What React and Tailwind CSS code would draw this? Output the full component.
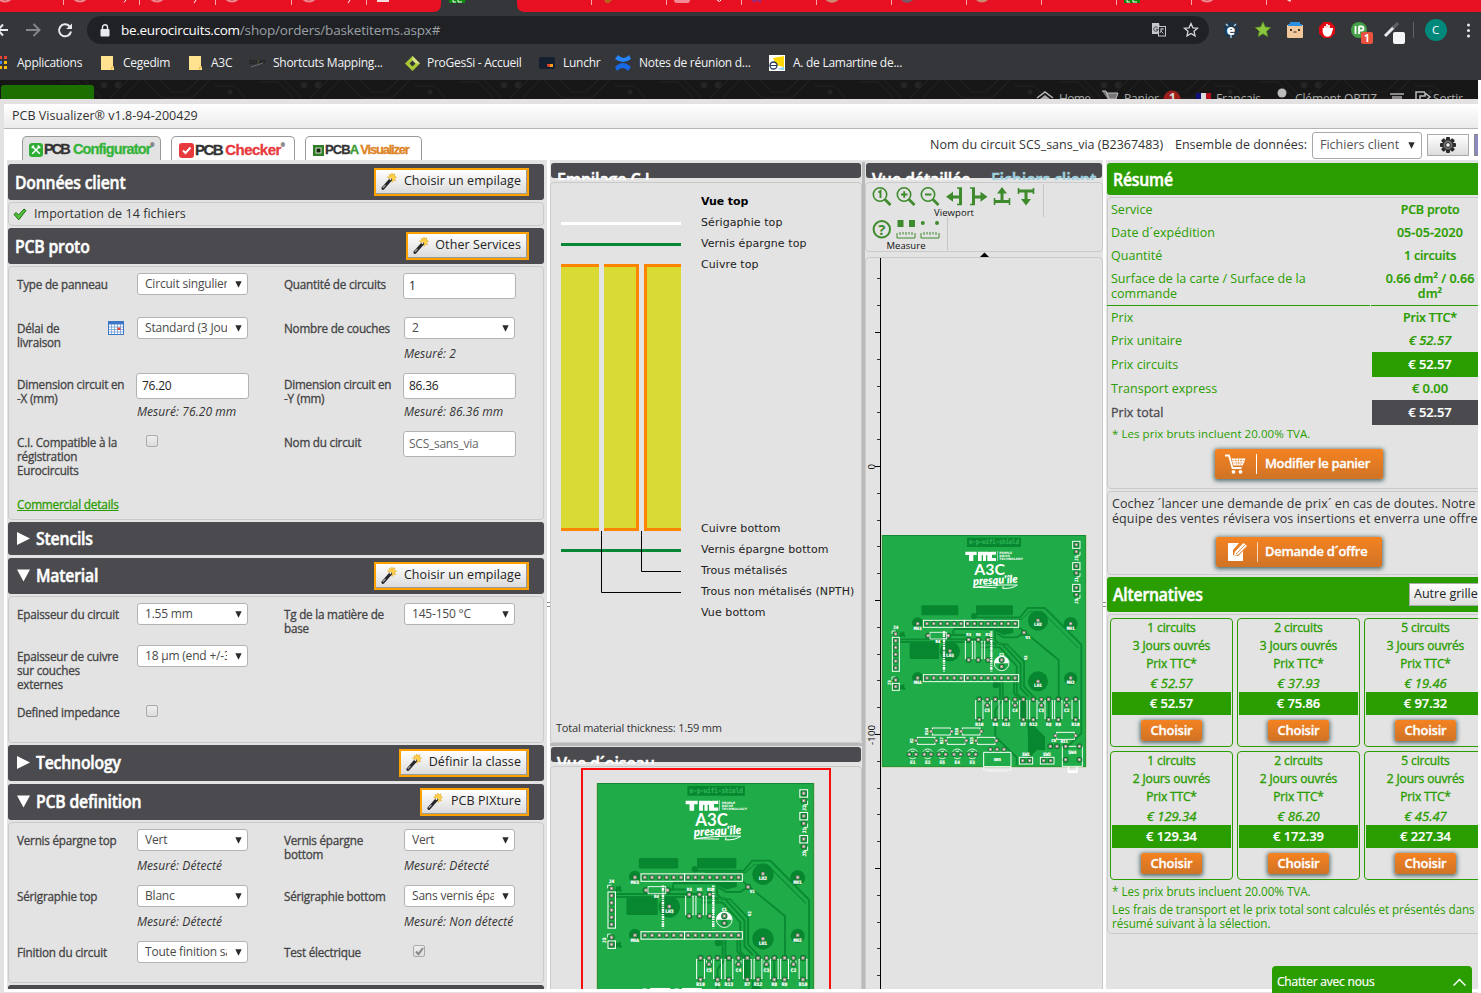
import React from "react";

const OS = "font-['Open_Sans','Noto_Sans',sans-serif]";

/* ---------- icons ---------- */
const Wand = () => (
  <svg width="16" height="17" viewBox="0 0 16 17">
    <path d="M11 0l.8 2.300L14 .8l-.8 2.500 2.300.9-2 1.300 1 2.300-2.400-.8-.8 2.400-1.400-2.200-2.300.6.9-2.300L6.500 4.200l2.500-.6L8.200 1.200l2 1.200z" fill="#ffd24a" stroke="#e8a818" strokeWidth=".6" />
    <path d="M2 15.200L9.500 6.800" stroke="#26262c" strokeWidth="3.200" strokeLinecap="round" />
    <path d="M1.800 14.800L4.500 11.800" stroke="#a5a5ad" strokeWidth="1.200" />
    <path d="M8.800 6.600l1.200-1.300" stroke="#f4f4f4" strokeWidth="1.800" />
  </svg>
);
const Check = () => (
  <svg width="14" height="13" viewBox="0 0 14 13">
    <path d="M1 6.500L3.200 4.500 5.500 7 11 1l2 1.500L5.800 11.800z" fill="#52c03a" stroke="#1d6f12" strokeWidth="1" />
  </svg>
);
const Calendar = () => (
  <svg width="16" height="14" viewBox="0 0 16 14">
    <rect x=".5" y=".5" width="15" height="13" fill="#fff" stroke="#3d76c4" />
    <rect x="0" y="0" width="16" height="3.500" fill="#3d76c4" />
    <path d="M3.500 3v10M6.500 3v10M9.500 3v10M12.500 3v10M1 6h14M1 8.500h14M1 11h14" stroke="#6f9ddb" strokeWidth=".8" />
    <rect x="9.500" y="6.500" width="3" height="2.500" fill="#e0492c" />
  </svg>
);
const Cart = () => (
  <svg width="21" height="20" viewBox="0 0 21 20">
    <path d="M0 1.500h4l3.500 12.500h9" fill="none" stroke="#fff" strokeWidth="1.800" />
    <path d="M6.500 4.500H20.500l-2.700 7H8.500z" fill="#fff" />
    <path d="M7.500 6.500h12M8.500 9h10" stroke="#e3791d" strokeWidth=".7" strokeDasharray="1.500 1" />
    <path d="M10.500 4.500l1 7M13.500 4.500v7M16.500 4.500l-1 7" stroke="#e3791d" strokeWidth=".4" />
    <circle cx="8.500" cy="17.800" r="1.900" fill="#fff" />
    <circle cx="15.500" cy="17.800" r="1.900" fill="#fff" />
  </svg>
);
const Edit = () => (
  <svg width="20" height="20" viewBox="0 0 20 20">
    <path d="M0 1h11L5 8v5l5 1 5-5v10H0z" fill="#fff" />
    <path d="M6 13.500l.8-3.800L15.500 1l3.500 3-9 8.800z" fill="#fff" />
    <path d="M8 12l9-9" stroke="#e3791d" strokeWidth=".8" />
  </svg>
);
const Gear = () => (
  <svg width="18" height="18" viewBox="-9 -9 18 18">
    {[0, 45, 90, 135].map((a) => (
      <rect key={a} x="-2" y="-8" width="4" height="16" rx="1" fill="#2b2b2b" transform={`rotate(${a})`} />
    ))}
    <circle r="5.800" fill="#333" />
    <circle r="4.400" fill="#777" />
    <circle r="2.400" fill="#eee" stroke="#222" />
  </svg>
);

/* ---------- browser chrome ---------- */
const seps = [63, 139, 215, 291, 366, 591, 666, 741, 816, 891, 966, 1041, 1116, 1191, 1266];
const tabDots = [5, 80, 157, 232, 309, 832, 1207];

function TabStrip() {
  return (
    <svg width="1481" height="12" className="block shrink-0">
      <rect width="1481" height="12" fill="#35363a" />
      <path d="M0 0H441V4Q441 12 433 12H0z" fill="#e81123" />
      <path d="M517 0H1481V12H525Q517 12 517 4z" fill="#e81123" />
      {seps.map((x) => (
        <rect key={x} x={x} width="1" height="5" fill="#f6a5ac" />
      ))}
      {tabDots.map((x) => (
        <path key={x} d={`M${x - 6} -1q6 5 12 0`} fill="none" stroke="#e98a90" strokeWidth="2" />
      ))}
      <path d="M126 0l-2 2.500M196 0l-2 3M350 0l-2 3M717 0q3 3 4 0" stroke="#fff" fill="none" />
      <rect x="377" y="0" width="12" height="2" fill="#f3d9d9" />
      <path d="M604 0h8l-3 3h-3z" fill="#b5651d" />
      <path d="M674 0h16q0 3-3 3h-10q-3 0-3-3z" fill="#f48a96" />
      <path d="M752 0h9l0 3-4-2-4 2z" fill="#9c2a7c" />
      <path d="M826 0q6 5 12 0zM976 0q6 5 12 0z" fill="#c98a70" />
      <path d="M901 0q6 6 12 0z" fill="#7a5a66" />
      <rect x="449" width="16" height="3" fill="#0a8a0a" />
      <path d="M453 0v2h3M458 0v2h4" stroke="#fff" fill="none" />
      <rect x="1124" width="16" height="3" fill="#0a8a0a" />
      <path d="M1127 0v2h3M1133 0v2h4" stroke="#fff" fill="none" />
      <path d="M1287 0h4v1.500h-2z" fill="#f6c8cc" />
    </svg>
  );
}

function Toolbar() {
  return (
    <div className="flex h-[36px] shrink-0 items-center text-white">
      <svg width="84" height="36" viewBox="0 0 84 36" fill="none">
        <path d="M-2 18H8M-2 18L3 12.500M-2 18L3 23.500" stroke="#e8eaed" strokeWidth="2" />
        <path d="M26 18H39M33.500 12L39.500 18L33.500 24" stroke="#85868a" strokeWidth="1.900" />
        <path d="M69.500 14.200A6 6 0 1 0 71 19.500" stroke="#e8eaed" strokeWidth="2" />
        <path d="M72 11.500V17H66.200z" fill="#e8eaed" />
      </svg>
      <div className="ml-[3px] flex h-7 w-[1122px] items-center rounded-full bg-[#202124]">
        <svg className="ml-[13px]" width="10" height="13" viewBox="0 0 10 13">
          <rect x=".5" y="5" width="9" height="7.500" rx="1" fill="#e8eaed" />
          <path d="M2.500 5.500V3.300a2.500 2.500 0 0 1 5 0V5.500" fill="none" stroke="#e8eaed" strokeWidth="1.400" />
        </svg>
        <div className={`ml-[11px] flex-1 text-[13.500px] leading-5 tracking-[-0.29px] text-white ${OS}`}>
          be.eurocircuits.com<span className="tracking-[-0.16px] text-[#9aa0a6]">/shop/orders/basketitems.aspx#</span>
        </div>
        <svg width="50" height="16" viewBox="0 0 50 16" className="mr-[8px]">
          <path d="M1 1h7l2 11H1z" fill="#c4c7cb" />
          <rect x="7.500" y="4.500" width="7" height="9.500" fill="#202124" stroke="#c4c7cb" />
          <path d="M9 7h4M11 6v1l-2 4M9.500 8.500l3 3" stroke="#c4c7cb" strokeWidth=".9" fill="none" />
          <path d="M6.500 5.500a2.200 2.200 0 1 0 .6 1.800H5" stroke="#35363a" fill="none" />
          <path d="M40 1.500l1.900 4.300 4.600.4-3.500 3.100 1 4.500-4-2.400-4 2.400 1-4.500L33.500 6.200l4.600-.4z" stroke="#d5d7da" strokeWidth="1.300" fill="none" />
        </svg>
      </div>
      <svg width="272" height="36" viewBox="1209 12 272 36">
        <circle cx="1231" cy="30" r="7.500" fill="#1d3a52" />
        <text x="1226.500" y="35" fontSize="14" fontWeight="800" fill="#fff" fontFamily="Open Sans">e</text>
        <path d="M1226 24l2 2M1236 24l-2 2M1231 35v3" stroke="#a9cde0" strokeWidth="1.500" />
        <path d="M1263 22l2.200 5 5.300.6-4 3.600 1.100 5.200-4.700-2.700-4.600 2.700 1.100-5.200-4-3.600 5.400-.6z" fill="#8cc63f" stroke="#5e9a24" strokeWidth=".8" />
        <rect x="1287" y="23" width="16" height="15" rx="1" fill="#f2c79b" />
        <rect x="1287" y="23" width="16" height="2" fill="#35363a" />
        <rect x="1290" y="22" width="10" height="3" fill="#2d8fe0" />
        <rect x="1288" y="24" width="14" height="2" fill="#2d8fe0" />
        <circle cx="1291" cy="30" r="1" /><circle cx="1299" cy="30" r="1" /><path d="M1293.500 32h3" stroke="#222" />
        <path d="M1323.700 22h6.600l4.700 4.700v6.600l-4.700 4.700h-6.600l-4.700-4.700v-6.600z" fill="#e30613" />
        <path d="M1323.500 28v4q1 4 4 4t4-5l1-3M1325 32v-6M1327 31v-7M1329 31v-6" stroke="#fff" strokeWidth="1.700" fill="#fff" />
        <circle cx="1359" cy="30" r="8" fill="#43a047" />
        <path d="M1355.500 26v8M1359 26v8M1359 26.500h2.500q2 0 2 2t-2 2h-2" stroke="#fff" strokeWidth="1.800" fill="none" />
        <rect x="1361" y="32" width="12" height="12" rx="2" fill="#e8523f" />
        <text x="1364" y="42" fontSize="10" fontWeight="700" fill="#fff" fontFamily="Open Sans">1</text>
        <path d="M1385 36l9-9" stroke="#e8eaed" strokeWidth="3" /><path d="M1393 28l5-5" stroke="#5f6368" strokeWidth="3" />
        <rect x="1393" y="32" width="12" height="12" rx="2" fill="#f4f5f6" />
        <rect x="1413" y="22" width="1" height="16" fill="#606266" />
        <circle cx="1436" cy="30" r="11" fill="#00897b" />
        <text x="1432" y="34" fontSize="11.500" fill="#fff" fontFamily="Open Sans">C</text>
        <circle cx="1468.500" cy="25" r="1.500" fill="#e8eaed" /><circle cx="1468.500" cy="30.500" r="1.500" fill="#e8eaed" /><circle cx="1468.500" cy="36" r="1.500" fill="#e8eaed" />
      </svg>
    </div>
  );
}

const Folder = () => (
  <svg width="14" height="14" viewBox="0 0 14 14"><path d="M0 0h12v10l1 1v3H0z" fill="#ffe38f" /><path d="M10 14v-3h3" fill="#e8b84a" /></svg>
);

const bookmarks = [
  { w: "w-[17px]", text: "Applications", next: "w-[84px]", icon: (
    <svg width="8" height="14" viewBox="0 0 8 14">
      <path d="M0 0h2v3H0zM4 0h3v3H4z" fill="#ea4335" /><path d="M0 5h2v3H0z" fill="#4285f4" /><path d="M4 5h3v3H4zM0 10h2v3H0zM4 10h3v3H4z" fill="#fbbc04" />
    </svg>) },
  { w: "w-[22px]", text: "Cegedim", next: "w-[66px]", icon: <Folder /> },
  { w: "w-[22px]", text: "A3C", next: "w-[38px]", icon: <Folder /> },
  { w: "w-[24px]", text: "Shortcuts Mapping...", next: "w-[131px]", icon: (
    <svg width="17" height="12" viewBox="0 0 17 12"><text x="0" y="7" fontSize="6" fontWeight="700" fill="#1d1e20" fontFamily="Liberation Sans">SO<tspan fill="#55592b">/</tspan>AT</text><path d="M2 10l12-4" stroke="#6a6b6f" /></svg>) },
  { w: "w-[23px]", text: "ProGesSi - Accueil", next: "w-[112px]", icon: (
    <svg width="17" height="17" viewBox="0 0 17 17"><path d="M8.500 1l7.500 7.500-7.500 7.500L1 8.500z" fill="#a9c934" /><path d="M8.500 1l7.500 7.500-7.500 0z" fill="#dbe08a" /><path d="M8.500 5.500l3 3-3 3-3-3z" fill="#35363a" /></svg>) },
  { w: "w-[24px]", text: "Lunchr", next: "w-[52px]", icon: (
    <svg width="17" height="13" viewBox="0 0 17 13"><rect width="16" height="12" rx="2" fill="#14202f" /><path d="M8 7h6v3h-5z" fill="#ff9b1a" /><path d="M8 7h3v3H9z" fill="#e5402c" /></svg>) },
  { w: "w-[24px]", text: "Notes de réunion d...", next: "w-[130px]", icon: (
    <svg width="16" height="16" viewBox="0 0 16 16"><path d="M0 4l3-4q6 6 11 0l2 4Q8 10 0 4z" fill="#2684ff" /><path d="M0 12Q8 4 16 12l-3 4q-5-6-11 0z" fill="#1668e3" /></svg>) },
  { w: "w-[24px]", text: "A. de Lamartine de...", next: "w-[130px]", icon: (
    <svg width="16" height="16" viewBox="0 0 16 16"><rect width="16" height="16" fill="#fff" /><path d="M4 3l11-2v11l-8-2z" fill="#ffd800" /><path d="M8 14l7-2v3z" fill="#7fd3e8" /><circle cx="4.500" cy="10.500" r="3.500" fill="#fff" stroke="#233a5c" strokeWidth="1.300" /><path d="M1 10.500h7" stroke="#233a5c" /></svg>) },
];

function Bookmarks() {
  return (
    <div className={`flex h-8 shrink-0 items-center pb-[2px] text-[12px] tracking-[-0.27px] whitespace-nowrap text-[#f1f3f4] ${OS}`}>
      {bookmarks.map((b) => (
        <div key={b.text} className="flex shrink-0 items-center">
          <span className={`${b.w} shrink-0`}>{b.icon}</span>
          <span className={`${b.next} shrink-0`}>{b.text}</span>
        </div>
      ))}
    </div>
  );
}

function SiteHeader() {
  return (
    <div className="flex h-[19px] w-[1478px] shrink-0 overflow-hidden bg-[#171717]">
      <svg width="1478" height="19">
        {[60, 260, 460, 660, 860, 1060, 1260].map((x) => (
          <g key={x} stroke="#242424" fill="none">
            <path d={`M${x} 2h18l16 16M${x + 6} -2h16l20 20M${x + 50} 18l18-18M${x + 62} 18l18-18M${x + 84} 0l18 18h30l18-18`} />
            <path d={`M${x + 100} 0l12 12h14l12-12M${x + 155} 6h20l10 12`} />
            <g fill="#242424"><circle cx={x + 44} cy="5" r="3" /><circle cx={x + 58} cy="5" r="3" /><circle cx={x + 170} cy="12" r="2" /></g>
          </g>
        ))}
        <path d="M1 19V8q0-3 3-3H91q3 0 3 3V19z" fill="#1c7000" />
        <g fill="#aaa" fontFamily="Open Sans" fontSize="12">
          <path d="M1037 18l8-6 8 6" fill="none" stroke="#bbb" strokeWidth="1.500" /><path d="M1040 19l5-4 5 4z" />
          <text x="1059" y="23" textLength="32">Home</text>
          <path d="M1102 11h4l3 10M1107 13h11l-2 6h-7z" stroke="#bbb" fill="#777" />
          <text x="1124" y="23" textLength="35">Panier</text>
          <circle cx="1172" cy="19" r="8.500" fill="#9c1f1c" />
          <text x="1169" y="22" fontWeight="700" fill="#ddd">1</text>
          <path d="M1196 13h5v7h-5z" fill="#10107c" /><path d="M1201 13h5v7h-5z" fill="#ddd" /><path d="M1206 13h5v7h-5z" fill="#b3131f" />
          <text x="1216" y="23" textLength="45">Français</text>
          <circle cx="1282" cy="13" r="4.500" fill="#bbb" />
          <text x="1295" y="23" textLength="82">Clément ORTIZ</text>
          <path d="M1390 13h14v2h-14zM1392 16h10v3h-10z" fill="#888" />
          <path d="M1425 12h-9v7M1420 19v-3h5v-3l5 4-3 2" stroke="#bbb" strokeWidth="1.500" fill="none" />
          <text x="1433" y="23" textLength="30">Sortir</text>
        </g>
      </svg>
    </div>
  );
}

/* ---------- modal chrome ---------- */
const Btn = ({ children, className = "" }) => (
  <span className={`border border-[#aaa] bg-gradient-to-b from-white to-[#ddd] ${className}`}>{children}</span>
);

function LogoTabs() {
  const tab = "flex h-[24px] items-center rounded-t-[5px] border border-b-0 border-[#999] pt-[3px] font-['Liberation_Sans',sans-serif] font-bold whitespace-nowrap [-webkit-text-stroke:0.3px]";
  return (
    <div className="flex items-end gap-[10px] pl-[18px]">
      <div className={`${tab} w-[139px] bg-[#e3e3e3] pl-[6px] text-[14.500px]`}>
        <svg width="14" height="14" viewBox="0 0 13 13"><rect width="13" height="13" rx="3" fill="#2eae34" /><path d="M3 3l7 7M10 3l-7 7M2.500 4.500l2-2M8 2.500l2.500 2" stroke="#fff" strokeWidth="1.500" /></svg>
        <span className="ml-[1px] tracking-[-1.9px] text-[#333]">PCB</span>
        <span className="ml-[4px] tracking-[-0.85px] text-[#35b43a]">Configurator</span>
        <span className="mb-[9px] text-[5px] text-[#777]">®</span>
      </div>
      <div className={`${tab} w-[124px] bg-white pl-[7px] text-[15px]`}>
        <svg width="15" height="15" viewBox="0 0 15 15"><rect width="15" height="15" rx="3" fill="#e8393d" /><path d="M4 7.500l2.500 2.500L11.500 4.500" stroke="#fff" strokeWidth="1.900" fill="none" /></svg>
        <span className="ml-[1px] tracking-[-1.500px] text-[#333]">PCB</span>
        <span className="ml-[3px] tracking-[-0.500px] text-[#e8393d]">Checker</span>
        <span className="mb-[9px] text-[5px] text-[#777]">®</span>
      </div>
      <div className={`${tab} w-[117px] bg-white pl-[7px] text-[13px]`}>
        <svg width="11" height="11" viewBox="0 0 11 11"><rect width="11" height="11" fill="#2f7d28" /><rect x="3" y="3" width="5" height="5" fill="#14260f" stroke="#cde3c8" /></svg>
        <span className="ml-[1px] tracking-[-0.9px] text-[#333]">PCB<span className="text-[#3f9a35]">A</span></span>
        <span className="ml-[2px] tracking-[-1.200px] text-[#de8426]">Visualizer</span>
      </div>
    </div>
  );
}

/* ---------- left column ---------- */
const HeadText = ({ children, className = "origin-left scale-x-[0.9] text-white" }) => (
  <span className={`inline-block text-[17.500px] leading-[22px] font-semibold tracking-[-0.2px] whitespace-nowrap [-webkit-text-stroke:0.5px] ${className}`}>{children}</span>
);

const WandBtn = ({ label, w }) => (
  <span className={`mr-[15px] flex h-[28px] ${w} shrink-0 border-2 border-[#ffa200] bg-white`}>
    <span className="flex flex-1 items-center justify-between border-r border-b border-[#999] bg-gradient-to-b from-white to-[#dcdcdc] pr-[5px] pl-[5px] text-[12.500px] tracking-[0.08px] whitespace-nowrap text-[#222]">
      <Wand />
      <span>{label}</span>
    </span>
  </span>
);

function Section({ title, arrow, btn, w, h = "h-[36px]" }) {
  return (
    <div className={`flex ${h} shrink-0 items-center justify-between overflow-hidden rounded-[3px] bg-[#4b4b4f] pl-[7px]`}>
      <span className={arrow ? "-mt-[2px] flex items-center" : "flex items-center"}>
        {arrow && (
          <svg width="13" height="13" viewBox="0 0 13 13" className="mt-px mr-[6px] ml-[2px]">
            <path d={arrow === "right" ? "M0 0L13 6.500 0 13z" : "M0 .5h13L6.500 12.500z"} fill="#fff" />
          </svg>
        )}
        <HeadText>{title}</HeadText>
      </span>
      {btn && <WandBtn label={btn} w={w} />}
    </div>
  );
}

const Arrow = () => (
  <svg width="7" height="7" viewBox="0 0 7 7" className="shrink-0"><path d="M.3 .3h6.400L3.500 6.800z" fill="#2b2b2b" /></svg>
);

function Field({ f }) {
  if (!f) return <div className="w-[120px]" />;
  return (
    <div className="flex w-[120px] shrink-0 flex-col">
      {f.select && (
        <div className="flex h-[22px] w-[111px] items-center justify-between rounded-[3px] border border-[#b3b3b3] bg-white pr-[5px] pl-[7px] text-[12px] text-[#4a4a4a]">
          <span className="w-[82px] overflow-hidden tracking-[-0.2px] whitespace-nowrap">{f.select}</span>
          <Arrow />
        </div>
      )}
      {f.input && (
        <div className={`-ml-px flex h-[26px] w-[113px] items-center rounded-[3px] border border-[#b3b3b3] bg-white pl-[5px] text-[12px] tracking-[-0.25px] ${f.dim ? "text-[#666]" : "text-[#222]"}`}>{f.input}</div>
      )}
      {f.box && (
        <div className="mt-[4px] ml-[9px] flex size-3 items-center justify-center rounded-[2px] border border-[#aaa] bg-gradient-to-b from-[#eee] to-[#ddd]">
          {f.box === "on" && <svg width="9" height="9" viewBox="0 0 9 9"><path d="M1 4.500l2.500 2.700L8 1" fill="none" stroke="#888" strokeWidth="2" /></svg>}
        </div>
      )}
      {f.note && <div className={`${f.input ? "mt-[5px]" : "mt-[7px]"} text-[12px] leading-4 tracking-[0.05px] whitespace-nowrap text-[#333] italic`}>{f.note}</div>}
    </div>
  );
}

const label = "text-[11.700px] leading-[14px] tracking-[-0.22px] whitespace-pre [-webkit-text-stroke:0.3px]";

function Row({ r }) {
  return (
    <div className={`flex ${r.h} pl-[8px] text-[#444]`}>
      <div className="flex w-[120px] shrink-0 justify-between pt-[4px] pr-[13px]">
        <span className={label}>{r.a}</span>
        {r.cal && <Calendar />}
      </div>
      <Field f={r.fa} />
      <div className={`ml-[27px] w-[120px] shrink-0 pt-[4px] ${label}`}>{r.b}</div>
      <Field f={r.fb} />
    </div>
  );
}

const proto = [
  { h: "h-[44px]", a: "Type de panneau", fa: { select: "Circuit singulier" }, b: "Quantité de circuits", fb: { input: "1" } },
  { h: "h-[56px]", a: "Délai de\nlivraison", cal: true, fa: { select: "Standard (3 Jours)" }, b: "Nombre de couches", fb: { select: "2", note: "Mesuré: 2" } },
  { h: "h-[58px]", a: "Dimension circuit en\n-X (mm)", fa: { input: "76.20", note: "Mesuré: 76.20 mm" }, b: "Dimension circuit en\n-Y (mm)", fb: { input: "86.36", note: "Mesuré: 86.36 mm" } },
  { h: "h-[65px]", a: "C.I. Compatible à la\nrégistration\nEurocircuits", fa: { box: "off" }, b: "Nom du circuit", fb: { input: "SCS_sans_via", dim: true } },
];
const material = [
  { h: "h-[42px]", a: "Epaisseur du circuit", fa: { select: "1.55 mm" }, b: "Tg de la matière de\nbase", fb: { select: "145-150 °C" } },
  { h: "h-[56px]", a: "Epaisseur de cuivre\nsur couches\nexternes", fa: { select: "18 µm (end +/-35)" } },
  { h: "h-[30px]", a: "Defined impedance", fa: { box: "off" } },
];
const definition = [
  { h: "h-[56px]", a: "Vernis épargne top", fa: { select: "Vert", note: "Mesuré: Détecté" }, b: "Vernis épargne\nbottom", fb: { select: "Vert", note: "Mesuré: Détecté" } },
  { h: "h-[56px]", a: "Sérigraphie top", fa: { select: "Blanc", note: "Mesuré: Détecté" }, b: "Sérigraphie bottom", fb: { select: "Sans vernis épargne", note: "Mesuré: Non détecté" } },
  { h: "h-[30px]", a: "Finition du circuit", fa: { select: "Toute finition sans" }, b: "Test électrique", fb: { box: "on" } },
];

const panel = "shrink-0 rounded-[4px] border border-[#cacaca]";

function LeftColumn() {
  return (
    <div className="flex w-[540px] shrink-0 flex-col overflow-hidden bg-[#e3e3e3] pt-1 pr-[3px] pl-px">
      <Section title="Données client" btn="Choisir un empilage" w="w-[155px]" />
      <div className={`${panel} mt-[2px] flex h-[24px] items-center gap-[7px] pl-[4px] text-[12.500px] tracking-[0.05px] text-[#333]`}>
        <Check />
        <span>Importation de 14 fichiers</span>
      </div>
      <div className="h-[2px] shrink-0" />
      <Section title="PCB proto" btn="Other Services" w="w-[123px]" />
      <div className={`${panel} mt-[2px] h-[254px] pt-[6px]`}>
        {proto.map((r) => <Row key={r.a} r={r} />)}
        <div className="pl-[8px] text-[11.800px] leading-4 tracking-[-0.2px] text-[#2a9d00] underline [-webkit-text-stroke:0.3px]">Commercial details</div>
      </div>
      <div className="h-[2px] shrink-0" />
      <Section title="Stencils" arrow="right" h="h-[33px]" />
      <div className="h-[3px] shrink-0" />
      <Section title="Material" arrow="down" btn="Choisir un empilage" w="w-[155px]" />
      <div className={`${panel} mt-[2px] h-[147px] pt-[6px]`}>{material.map((r) => <Row key={r.a} r={r} />)}</div>
      <div className="h-[2px] shrink-0" />
      <Section title="Technology" arrow="right" btn="Définir la classe" w="w-[130px]" />
      <div className="h-[3px] shrink-0" />
      <Section title="PCB definition" arrow="down" btn="PCB PIXture" w="w-[109px]" />
      <div className={`${panel} mt-[2px] h-[161px] pt-[6px]`}>{definition.map((r) => <Row key={r.a} r={r} />)}</div>
      <div className="mt-[2px] h-[8px] shrink-0 rounded-[3px] bg-[#4b4b4f]" />
    </div>
  );
}

/* ---------- circuit board drawing ---------- */
const T = ({ x, y, s = 13, children, r, fill = "#fff", w }) => (
  <text x={x} y={y} fontSize={s} fontWeight="700" fill={fill} stroke={fill} strokeWidth=".6" textAnchor="middle" textLength={w} lengthAdjust="spacingAndGlyphs" fontFamily="DejaVu Sans Mono, monospace" transform={r ? `rotate(${r} ${x} ${y})` : undefined}>{children}</text>
);
const Pad = ({ x, y, r = 9 }) => (
  <g>
    <circle cx={x} cy={y} r={r} fill="#087d2c" />
    <rect x={x - 5} y={y - 5} width="10" height="10" rx="2.500" fill="#9c8f86" />
    <rect x={x - 2} y={y - 2} width="4" height="4" fill="#f1eeeb" />
  </g>
);
const Box = ({ x, y, w, h }) => <rect x={x} y={y} width={w} height={h} fill="none" stroke="#fff" strokeWidth="2.800" />;
const range = (n, a, d) => Array.from({ length: n }, (_, i) => a + i * d);
const bottomR = [[328, "R10"], [376, "R6"], [408, "R13"], [460, "R7"], [490, "R12"], [536, "R8"], [565, "R9"], [617, "R10"]];
const bottomC = [[352, "C5"], [435, "C4"], [514, "C3"], [590, "C2"]];
const lowerR = [[183, 245, 634, "R14"], [273, 334, 634, "R16"], [138, 199, 662, "R2"], [228, 289, 662, "R17"], [318, 379, 662, "R15"], [556, 617, 647, "R11"]];

function Board({ width, height }) {
  const tr = "#0a8a33";
  return (
    <svg width={width} height={height} viewBox="36 45 612 696" preserveAspectRatio="none" overflow="visible" className="block">
      <rect x="36" y="45" width="612" height="696" fill="#1fab47" />
      <rect x="37.500" y="46.500" width="609" height="693" fill="none" stroke="#128a35" strokeWidth="3" />
      <path d="M36 45V741H648V45" fill="none" stroke="#7fae3c" strokeWidth="1.500" />
      <g fill="#078730">
        <rect x="291" y="53" width="162" height="28" />
        <rect x="154" y="256" width="111" height="30" rx="4" />
        <rect x="318" y="256" width="111" height="30" rx="4" />
        <rect x="119" y="369" width="88" height="48" rx="3" />
        <circle cx="504" cy="302" r="30" /><circle cx="504" cy="484" r="30" /><circle cx="240" cy="394" r="30" />
        <circle cx="143" cy="309" r="17" /><circle cx="143" cy="473" r="17" /><circle cx="602" cy="312" r="21" /><circle cx="602" cy="476" r="20" />
        <path d="M89 334l5 5 5-5 6 6-3 3 5 5-5 4-5-4-5 4-5-5 3-4zM89 492l5 5 5-5 6 6-3 3 5 5-5 4-5-4-5 4-5-5 3-4z" />
        <circle cx="378" cy="495" r="10" />
        <rect x="448" y="540" width="24" height="58" />
        <path d="M472 598L525 650V690H500L474 720V650z" />
        <circle cx="312" cy="288" r="9" />
        <path d="M250 322H430V338L400 345L370 330H250z" />
      </g>
      <g fill="none" stroke={tr} strokeWidth="5.500">
        <path d="M318 292H450L474 264H525L634 374V640L590 682" />
        <path d="M340 298H455L480 274H515L625 384" strokeWidth="3" />
        <path d="M446 322L566 420V538" />
        <path d="M90 358H330M90 366H300" />
        <path d="M240 345H300M375 322V360L388 372H410L462 425V500L490 530" />
        <path d="M330 370H395L452 432V505L476 530" />
        <path d="M330 382H390L440 438V520L460 540" />
        <path d="M365 340V365L380 378" />
        <path d="M390 485V538M398 485V540L376 570V650L440 712V735" />
        <path d="M432 485V520L452 540" />
        <path d="M536 545V600" />
        <path d="M250 330V345M380 340L400 352H440L462 338" />
      </g>
      <g fill="none" stroke="#1fab47" strokeWidth="1.500">
        <path d="M474 268H522L630 377M446 326L562 422M378 370H408L457 427V502M90 362H330M334 376H392L446 435V510" />
      </g>
      <T x="372" y="73" s="20" w={150} fill="#2db356">e-p-wifi-shield</T>
      <g fill="#fff">
        <path d="M286 95h34v10h-10v18h-13v-18h-11zM324 123v-28h32q6 0 6 6v22h-10v-17h-4v17h-9v-17h-4v17zM378 95v9h-12v10h12v9h-16q-6 0-6-6v-16q0-6 6-6z" />
        <rect x="381" y="93" width="1.500" height="30" />
      </g>
      <g fontFamily="DejaVu Sans" fontWeight="700" fontSize="9" fill="#fff">
        <text x="388" y="103" textLength="38">PEOPLE</text><text x="388" y="112" textLength="32">DRIVE</text><text x="388" y="121" textLength="71">TECHNOLOGY</text>
      </g>
      <text x="313" y="166" fontSize="46" fontFamily="Lato" fontWeight="700" fill="#fff" textLength="92" lengthAdjust="spacingAndGlyphs">A3C</text>
      <text x="309" y="192" fontSize="34" fontFamily="Lato" fontStyle="italic" fontWeight="800" fill="#fff" textLength="134" lengthAdjust="spacingAndGlyphs" transform="rotate(-3 375 180)">presqu'île</text>
      <path d="M309 203Q360 193 442 195Q425 207 398 205L400 198M314 202L380 203" fill="none" stroke="#fff" strokeWidth="2.800" />

      {range(6, 171, 20.4).concat(range(8, 293, 20.3)).map((x) => (
        <g key={x}><Pad x={x} y={311} r={8} /><Pad x={x} y={474} r={8} /></g>
      ))}
      <Box x={160} y={301} w={123} h={21} /><Box x={283} y={301} w={163} h={21} />
      <Box x={160} y={464} w={123} h={21} /><Box x={283} y={464} w={163} h={21} />
      {range(6, 342, 20.3).map((y) => <Pad key={y} x={77} y={y} r={8} />)}
      <Box x={67} y={352} w={21} h={102} />
      <path d="M66 342V333H77M66 480V471H77" stroke="#fff" strokeWidth="2.500" fill="none" />
      <Pad x={77} y={480} /><Pad x={77} y={500} /><Box x={67} y={490} w={21} h={21} />
      <T x={77} y={328}>J4</T><T x={62} y={488} r={-90}>J3</T>
      {[[74, "J2"], [138, "J1"], [203, "J3"]].map(([y, l]) => (
        <g key={l}>
          <Pad x={619} y={y} /><Pad x={619} y={y + 21} /><Box x={608} y={y - 10} w={22} h={21} />
          <path d={`M619 ${y + 32}H630V${y + 21}`} fill="none" stroke="#fff" strokeWidth="2.500" />
          <T x={625} y={y + 41} r={-90}>{l}</T>
        </g>
      ))}
      {[[143, 311, "MH3"], [143, 474, "MHA"], [602, 311, "MH1"], [602, 474, "MH2"], [504, 301, "LH2"], [504, 484, "LH1"], [240, 393, "LH3"], [462, 338, ""]].map(([x, y, l]) => (
        <g key={l}><Pad x={x} y={y} />{l && <T x={x} y={y + 18} s={13}>{l}</T>}</g>
      ))}
      <T x={474} y={356} s={12}>V1</T><T x={470} y={413} r={-90} s={11}>V2</T>
      <Pad x={174} y={347} /><Pad x={235} y={347} /><path d="M180 337h50v20h-50z" fill="none" stroke="#fff" strokeWidth="2.500" /><T x={204} y={369} s={12}>R4</T>
      {[[296, "R3"], [325, "R5"], [354, "R1"]].map(([x, l]) => (
        <g key={l}><Box x={x - 10} y={364} w={21} h={52} /><Pad x={x} y={359} /><Pad x={x} y={420} /><T x={x} y={349} s={12}>{l}</T></g>
      ))}
      <path d="M222 334V455M364 334V455" stroke="#fff" strokeWidth="7" strokeDasharray="4 2 7 1 3 3" />
      <circle cx="395" cy="430" r="22" fill="none" stroke="#fff" strokeWidth="2.500" />
      <path d="M373 430a22 22 0 0 1 44 0z" fill="#fff" /><Pad x={395} y={420} /><Pad x={395} y={440} /><T x={395} y={407} s={12}>C1</T>
      {bottomR.map(([x, l]) => (
        <g key={x}><Box x={x - 11} y={542} w={22} h={54} /><Pad x={x} y={538} /><Pad x={x} y={599} /><T x={x} y={617} s={13.500}>{l}</T></g>
      ))}
      {bottomC.map(([x, l]) => (
        <g key={x}><path d={`M${x - 7} 545v10M${x + 7} 545v10`} stroke="#fff" strokeWidth="2.500" /><Pad x={x} y={538} r={8} /><Pad x={x} y={556} r={8} /><T x={x} y={577} s={13.500}>{l}</T></g>
      ))}
      {lowerR.map(([a, b, y, l]) => (
        <g key={l}><Box x={a + 4} y={y - 10} w={b - a - 8} h={21} /><Pad x={a} y={y} r={7} /><Pad x={b} y={y} r={7} />
          {l === "R11" ? <T x={583} y={669} s={12}>{l}</T> : <T x={a - 9} y={y} r={-90} s={12}>{l}</T>}</g>
      ))}
      {[[128, "E1"], [173, "E2"], [217, "E5"], [262, "E4"], [307, "E3"]].map(([x, l]) => (
        <g key={l}><path d={`M${x - 14} 695a16 16 0 0 1 28 0M${x - 10} 713q10 7 20 0M${x - 5} 694h10`} stroke="#fff" strokeWidth="2.500" fill="none" /><Pad x={x - 10} y={703} r={8} /><Pad x={x + 10} y={703} r={8} /><T x={x} y={731} s={13.500}>{l}</T></g>
      ))}
      <Pad x={361} y={688} r={8} /><Pad x={381} y={688} r={8} /><Pad x={402} y={688} r={8} />
      <path d="M341 697h82v43h-82z" fill="none" stroke="#fff" strokeWidth="3" /><path d="M341 740v10h82v-10M352 753h62" fill="none" stroke="#f4f4f4" strokeWidth="3" /><T x={382} y={723} s={12}>SW3</T>
      <Pad x={458} y={722} /><Pad x={479} y={722} /><Box x={448} y={712} w={40} h={20} /><T x={468} y={707} s={13.500}>SW1</T>
      <Pad x={521} y={722} /><Pad x={542} y={722} /><Box x={511} y={712} w={41} h={20} /><T x={531} y={707} s={13.500}>SW2</T>
      <Pad x={541} y={679} /><Pad x={561} y={679} /><T x={551} y={667} s={12}>C6</T>
      <Box x={577} y={679} w={60} h={60} />
      {[[587, 679], [628, 679], [587, 719], [628, 719]].map(([x, y]) => <Pad key={`${x}-${y}`} x={x} y={y} />)}
      <T x={607} y={703} s={13.500}>SW4</T><path d="M595 740v13h26v-13M593 757h30" fill="none" stroke="#fff" strokeWidth="4" />
    </svg>
  );
}

/* ---------- stack-up and views ---------- */
const ShortHead = ({ left, right }) => (
  <div className="h-[15px] shrink-0 rounded-[3px] bg-[#4b4b4f]">
    <div className="flex h-[17px] justify-between overflow-hidden px-[6px] pt-[5px]">
      <HeadText className="origin-left scale-x-[0.92] text-white">{left}</HeadText>
      {right && <HeadText className="origin-right scale-x-[0.93] text-[#9fd0de]">{right}</HeadText>}
    </div>
  </div>
);

function StackColumn() {
  const line = "h-[21px] whitespace-nowrap";
  return (
    <div className="flex w-[312px] shrink-0 flex-col overflow-hidden bg-[#e3e3e3] pt-[3px]">
      <div className="px-px"><ShortHead left="Empilage C.I." /></div>
      <div className={`${panel} mt-[4px] flex h-[561px] flex-col pt-[8px]`}>
        <div className="flex h-[529px] gap-[20px] pl-[10px]">
          <svg width="120" height="430" viewBox="561 191 120 430" className="shrink-0">
            <rect x="561" y="222" width="120" height="3" fill="#fff" />
            <rect x="561" y="243" width="120" height="3" fill="#068735" />
            <rect x="561" y="264" width="38" height="267" fill="#ff8400" /><rect x="561" y="267" width="38" height="261" fill="#dada34" />
            <rect x="604" y="264" width="35" height="267" fill="#ff8400" /><rect x="604" y="267" width="32" height="261" fill="#dada34" />
            <rect x="644" y="264" width="37" height="267" fill="#ff8400" /><rect x="647" y="267" width="34" height="261" fill="#dada34" />
            <rect x="561" y="549" width="120" height="3" fill="#068735" />
            <path d="M641.500 531V571.500H681M601.500 531V592.500H681" stroke="#000" fill="none" />
          </svg>
          <div className="font-['DejaVu_Sans',sans-serif] text-[11px] leading-[21px] tracking-[0.08px] text-[#222]">
            <div className={`${line} font-bold tracking-[-0.1px] text-black`}>Vue top</div>
            <div className={line}>Sérigaphie top</div>
            <div className={line}>Vernis épargne top</div>
            <div className="h-[264px]">Cuivre top</div>
            <div className={line}>Cuivre bottom</div>
            <div className={line}>Vernis épargne bottom</div>
            <div className={line}>Trous métalisés</div>
            <div className={line}>Trous non métalisés (NPTH)</div>
            <div className={line}>Vue bottom</div>
          </div>
        </div>
        <div className="pl-[5px] text-[11px] leading-4 tracking-[-0.2px] text-[#333]">Total material thickness: 1.59 mm</div>
      </div>
      <div className="h-[3px] shrink-0 bg-[#b9b9b9]" />
      <div className="mt-px px-px"><ShortHead left="Vue d´oiseau" /></div>
      <div className={`${panel} mt-[4px] h-[240px] pl-[30px]`}>
        <div className="mt-px h-[260px] w-[250px] border-2 border-[#fb0d0d] pt-[13px] pl-[14px]">
          <Board width={217} height={247} />
        </div>
      </div>
    </div>
  );
}

function ToolIcons() {
  const g = "#3f8a2d";
  return (
    <svg width="236" height="68" viewBox="866 183 236 68" className="block">
      <g fill="none" stroke={g} strokeWidth="1.600">
        {[880, 904, 928].map((x) => (
          <g key={x}><circle cx={x} cy="194.500" r="6.700" /><path d={`M${x + 5} 199.500l5.500 5.500`} strokeWidth="2.800" /></g>
        ))}
        <path d="M878.500 192.500l2-1.500v7M901 194.500h6.500M904.200 191.200v6.500M925 194.500h6.500" strokeWidth="1.900" />
        <path d="M949 197h11" strokeWidth="3" /><path d="M960.500 188v17" strokeWidth="3" /><path d="M957 188h5M957 204.500h5" />
        <path d="M973 197h10" strokeWidth="3" /><path d="M973.500 188v17" strokeWidth="3" /><path d="M970 188h5M970 204.500h5" />
        <path d="M1002 192v9" strokeWidth="3" /><path d="M994.500 201.500h15" strokeWidth="3" /><path d="M994.500 198v7M1009.500 198v7" />
        <path d="M1026 191v9" strokeWidth="3" /><path d="M1018.500 191h15" strokeWidth="3" /><path d="M1018.500 188v6M1033.500 188v6" />
        <circle cx="881.800" cy="229.300" r="8.200" strokeWidth="2" />
        <path d="M897 233v5h18v-5M900 232v3M903 232v2.500M906 232v3M909 232v2.500M912 232v3M921 233v5h18v-5M924 232v3M927 232v2.500M930 232v3M933 232v2.500M936 232v3" strokeWidth="1" />
      </g>
      <g fill={g}>
        <path d="M946 196.800l7-5v10zM987.500 196.800l-7-5v10zM1002 187l-5 6.500h10zM1026 205.500l-5-6.500h10z" />
        <path d="M897.500 220h6v7h-6zM909 220h6v7h-6z" /><circle cx="922.800" cy="223" r="2" /><circle cx="937" cy="223" r="2" />
        <text x="878.300" y="235" fontSize="15" fontWeight="700" fontFamily="Open Sans">?</text>
      </g>
      <path d="M1043.500 184v33M947.500 217v33" stroke="#c6c6c6" />
      <g fontFamily="Open Sans" fontSize="9.500" fill="#111"><text x="934" y="216" textLength="40">Viewport</text><text x="886.500" y="249" textLength="39">Measure</text></g>
    </svg>
  );
}

function DetailColumn() {
  return (
    <div className="flex w-[238px] shrink-0 flex-col overflow-hidden bg-[#e3e3e3] pt-[3px]">
      <div className="px-px"><ShortHead left="Vue détaillée" right="Fichiers client" /></div>
      <div className={`${panel} mt-[4px] h-[70px] overflow-hidden`}><ToolIcons /></div>
      <svg width="238" height="5" className="shrink-0"><path d="M115 5l4.500-4.500L124 5z" /></svg>
      <div className={`${panel} flex h-[740px]`}>
        <svg width="16" height="731" viewBox="866 258 16 731" className="shrink-0">
          <rect x="880" y="258" width="1" height="731" />
          {range(27, -7, 1).map((i) => {
            const y = Math.round(466 + i * 26.8);
            return <rect key={i} x={i % 5 ? 877 : 875} y={y} width={i % 5 ? 3 : 5} height="1" fill={i % 5 ? "#333" : "#000"} />;
          })}
          <g fontFamily="Open Sans" fontSize="9.500"><text transform="translate(874.500 469.500) rotate(-90)">0</text><text transform="translate(875 745) rotate(-90)" textLength="20">-100</text></g>
        </svg>
        <div className="pt-[277px]"><Board width={204} height={232} /></div>
      </div>
    </div>
  );
}

/* ---------- right column ---------- */
const orange = "rounded-[2px] bg-gradient-to-b from-[#f58220] to-[#cf7326] font-semibold text-white shadow-[0_1px_4px_1px_#2f4f4fcc] [-webkit-text-stroke:0.3px]";

function SummaryRow({ l, v, h = "h-[23px]", cls = "text-[12.500px] tracking-[-0.2px]", lc = "" }) {
  return (
    <div className={`flex ${h} items-center`}>
      <span className={`w-[261px] shrink-0 pl-[4px] text-[12.500px] leading-[15px] tracking-[0.02px] whitespace-pre ${lc}`}>{l}</span>
      <span className={`ml-[4px] flex h-full w-[116px] shrink-0 items-center justify-center text-center leading-[15px] font-semibold whitespace-pre [-webkit-text-stroke:0.2px] ${cls}`}>{v}</span>
    </div>
  );
}

const Card = ({ c }) => (
  <div className="flex h-[129px] w-[123px] shrink-0 flex-col items-center rounded-[4px] border border-[#2a9d00] px-px text-[12px] leading-[18px] [-webkit-text-stroke:0.35px]">
    <div className="tracking-[-0.15px]">{c[0]} circuits</div>
    <div className="tracking-[-0.15px]">{c[1]} Jours ouvrés</div>
    <div className="tracking-[-0.15px]">Prix TTC*</div>
    <div className="mt-px text-[13px] italic">€ {c[2]}</div>
    <div className="flex h-[23px] w-full items-center justify-center bg-[#2a9d00] pb-px text-[13px] font-semibold tracking-[-0.1px] text-white [-webkit-text-stroke:0.2px]">€ {c[3]}</div>
    <div className={`${orange} mt-[5px] flex h-[21px] w-[61px] items-center justify-center pb-[2px] text-[13px] tracking-[-0.25px]`}>Choisir</div>
  </div>
);

const cards = [
  [["1", "3", "52.57", "52.57"], ["2", "3", "37.93", "75.86"], ["5", "3", "19.46", "97.32"]],
  [["1", "2", "129.34", "129.34"], ["2", "2", "86.20", "172.39"], ["5", "2", "45.47", "227.34"]],
];

function RightColumn() {
  return (
    <div className="flex w-[372px] shrink-0 flex-col overflow-hidden bg-[#e3e3e3] pt-[3px] pl-px text-[#2a9d00]">
      <div className="w-[390px]">
        <div className="flex h-[32px] items-center rounded-[3px] bg-[#2a9d00] pl-[6px]"><HeadText>Résumé</HeadText></div>
        <div className={`${panel} mt-[2px] h-[292px]`}>
          <div className="-ml-px">
            <SummaryRow l="Service" v="PCB proto" />
            <SummaryRow l="Date d´expédition" v="05-05-2020" cls="text-[12.500px] tracking-[0.1px]" />
            <SummaryRow l="Quantité" v="1 circuits" />
            <SummaryRow h="h-[38px]" l={"Surface de la carte / Surface de la\ncommande"} v={"0.66 dm² / 0.66\ndm²"} cls="text-[12.500px] tracking-[0px]" />
            <div className="flex gap-px"><div className="h-px w-[263px] bg-[#2a9d00]" /><div className="h-px w-[120px] bg-[#2a9d00]" /></div>
            <SummaryRow l="Prix" v="Prix TTC*" />
            <SummaryRow l="Prix unitaire" v="€ 52.57" cls="text-[13px] italic" />
            <SummaryRow h="h-[25px]" l="Prix circuits" v="€ 52.57" cls="bg-[#2a9d00] text-[13px] tracking-[-0.1px] text-white" />
            <SummaryRow l="Transport express" v="€ 0.00" cls="text-[13px] tracking-[-0.1px]" />
            <SummaryRow h="h-[25px]" l="Prix total" lc="text-[#4b4b4f] [-webkit-text-stroke:0.3px]" v="€ 52.57" cls="bg-[#4b4b4f] text-[13px] tracking-[-0.1px] text-white" />
          </div>
          <div className="pl-[4px] text-[11.500px] leading-[17px] tracking-[0.05px]">* Les prix bruts incluent 20.00% TVA.</div>
          <div className={`${orange} mt-[7px] ml-[107px] flex h-[30px] w-[168px] items-center text-[13px]`}>
            <span className="ml-[10px]"><Cart /></span>
            <span className="mr-[8px] ml-[10px] h-[20px] w-px bg-white" />
            <span className="tracking-[-0.37px]">Modifier le panier</span>
          </div>
        </div>
        <div className={`${panel} mt-[2px] h-[84px]`}>
          <div className="pt-[4px] pl-[4px] text-[12.500px] leading-[15px] tracking-[0.1px] whitespace-pre text-[#333]">{"Cochez ´lancer une demande de prix´ en cas de doutes. Notre\néquipe des ventes révisera vos insertions et enverra une offre"}</div>
          <div className={`${orange} mt-[11px] ml-[108px] flex h-[30px] w-[166px] items-center text-[13px]`}>
            <span className="ml-[12px]"><Edit /></span>
            <span className="mr-[7px] ml-[9px] h-[20px] w-px bg-white/70" />
            <span className="tracking-[-0.3px]">Demande d´offre</span>
          </div>
        </div>
        <div className="mt-[2px] flex h-[35px] items-center rounded-[3px] bg-[#2a9d00] pl-[6px]">
          <span className="w-[296px] shrink-0"><HeadText>Alternatives</HeadText></span>
          <Btn className="flex h-[23px] w-[90px] shrink-0 items-center pl-[4px] text-[12.500px] whitespace-nowrap text-[#222]">Autre grille</Btn>
        </div>
        <div className={`${panel} mt-[2px] h-[320px] overflow-hidden pt-[3px]`}>
          <div className="flex flex-col gap-[4px] pl-[2px]">
            {cards.map((row, i) => <div key={i} className="flex gap-[4px]">{row.map((c) => <Card key={c[3]} c={c} />)}</div>)}
          </div>
          <div className="pt-[3px] pl-[4px] text-[11.700px] leading-[17px] tracking-[-0.03px]">* Les prix bruts incluent 20.00% TVA.</div>
          <div className="pt-[2px] pl-[4px] text-[11.700px] leading-[14px] tracking-[-0.07px] whitespace-pre">{"Les frais de transport et le prix total sont calculés et présentés dans\nrésumé suivant à la sélection."}</div>
        </div>
      </div>
    </div>
  );
}

const Grip = () => <div className="mt-[442px] h-[5px] w-full border-y border-[#888]" />;

export default function App() {
  return (
    <div className={`relative flex h-[993px] w-[1481px] flex-col overflow-hidden bg-white ${OS}`}>
      <div className="flex flex-col bg-[#35363a]">
        <TabStrip />
        <Toolbar />
        <Bookmarks />
      </div>
      <SiteHeader />
      <div className="flex h-[894px] w-[1478px] flex-col border-t-[5px] border-b border-l-4 border-[#e3e1e1] bg-white">
        <div className="flex h-[25px] shrink-0 items-center border-b border-[#b5b5b5] bg-gradient-to-b from-white to-[#ebebeb] pl-[8px] text-[12.500px] tracking-[0.03px] text-[#333]">PCB Visualizer® v1.8-94-200429</div>
        <div className="flex h-[31px] shrink-0 items-end justify-between">
          <LogoTabs />
          <div className="flex h-[30px] items-center text-[12.500px] whitespace-nowrap text-[#333]">
            <span className="w-[245px]">Nom du circuit SCS_sans_via (B2367483)</span>
            <span className="w-[137px]">Ensemble de données:</span>
            <span className="flex h-[27px] w-[110px] items-center justify-between rounded-[3px] border border-[#aaa] pr-[6px] pl-[7px] text-[#555]">Fichiers client <Arrow /></span>
            <Btn className="ml-[5px] flex h-[22px] w-[42px] items-center justify-center"><Gear /></Btn>
            <span className="ml-[5px] h-[22px] w-[4px] border border-r-0 border-[#888] bg-[#8a8ac0]" />
          </div>
        </div>
        <div className="flex h-[829px] shrink-0 bg-[#e3e3e3]">
          <div className="w-[3px] shrink-0 bg-white" />
          <LeftColumn />
          <div className="w-[3px] shrink-0 bg-white"><Grip /></div>
          <StackColumn />
          <div className="mt-[2px] w-[3px] shrink-0 bg-[#bababa]" />
          <DetailColumn />
          <div className="w-[3px] shrink-0 bg-white"><Grip /></div>
          <RightColumn />
        </div>
      </div>
      <div className="absolute right-[9px] bottom-0 flex h-[27px] w-[200px] items-center justify-between rounded-t-[4px] bg-[#2a9d00] pt-[4px] pr-[6px] pl-[5px] text-[12px] tracking-[-0.2px] text-white [-webkit-text-stroke:0.2px]">
        Chatter avec nous
        <svg width="13" height="8" viewBox="0 0 13 8"><path d="M.5 7.500l6-6 6 6" fill="none" stroke="#fff" strokeWidth="1.500" /></svg>
      </div>
    </div>
  );
}
